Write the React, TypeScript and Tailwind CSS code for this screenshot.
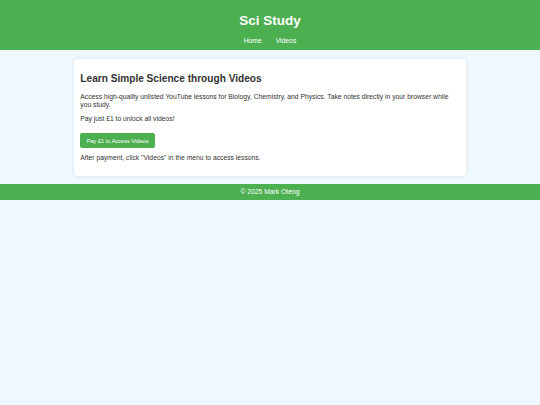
export default function App() {
  return (
    <div className="min-h-screen bg-[#f0f8ff] font-['Liberation_Sans',Arial,sans-serif] text-[6.75px] leading-[7.76px] text-[#333]">
      <header className="bg-[#4caf50] pt-[12.6px] pb-[4.3px] text-center text-white">
        <h1 className="text-[13.5px] leading-[15.5px] font-bold">Sci Study</h1>
        <nav className="mt-[9.4px] flex justify-center gap-[14px]">
          <a href="#">Home</a>
          <a href="#">Videos</a>
        </nav>
      </header>

      <main className="mx-auto mt-[9px] w-[392px] rounded-[3.4px] bg-white px-[6.33px] pt-[6.33px] pb-[13.5px] shadow-[0_0_4px_rgba(0,0,0,0.1)]">
        <h2 className="mt-[8px] text-[10.125px] leading-[11.63px] font-bold">
          Learn Simple Science through Videos
        </h2>
        <p className="mt-[8.4px]">
          Access high-quality unlisted YouTube lessons for Biology, Chemistry, and Physics. Take notes
          directly in your browser while you study.
        </p>
        <p className="mt-[6.75px]">Pay just £1 to unlock all videos!</p>
        <button className="mt-[10.5px] block rounded-[2px] bg-[#4caf50] px-[6.33px] py-[4.22px] text-[5.63px] leading-[6.5px] text-white">
          Pay £1 to Access Videos
        </button>
        <p className="mt-[5.9px]">After payment, click "Videos" in the menu to access lessons.</p>
      </main>

      <footer className="mt-[8px] bg-[#4caf50] py-[4.22px] text-center text-white">
        © 2025 Mark Oteng
      </footer>
    </div>
  );
}
